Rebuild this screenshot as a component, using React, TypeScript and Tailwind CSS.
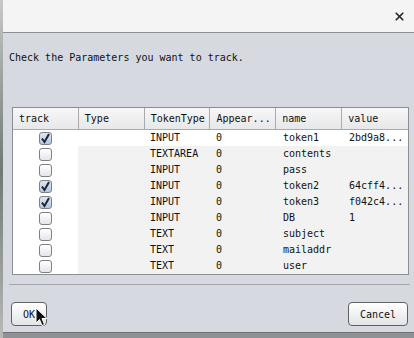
import { X } from 'lucide-react'

const COLS = ['track', 'Type', 'TokenType', 'Appear...', 'name', 'value']

const ROWS = [
  { on: true, tokenType: 'INPUT', appear: '0', name: 'token1', value: '2bd9a8...' },
  { on: false, tokenType: 'TEXTAREA', appear: '0', name: 'contents', value: '' },
  { on: false, tokenType: 'INPUT', appear: '0', name: 'pass', value: '' },
  { on: true, tokenType: 'INPUT', appear: '0', name: 'token2', value: '64cff4...' },
  { on: true, tokenType: 'INPUT', appear: '0', name: 'token3', value: 'f042c4...' },
  { on: false, tokenType: 'INPUT', appear: '0', name: 'DB', value: '1' },
  { on: false, tokenType: 'TEXT', appear: '0', name: 'subject', value: '' },
  { on: false, tokenType: 'TEXT', appear: '0', name: 'mailaddr', value: '' },
  { on: false, tokenType: 'TEXT', appear: '0', name: 'user', value: '' },
]

function Check({ on }: { on: boolean }) {
  return (
    <div
      className={`w-[13px] h-[13px] rounded-[3px] border border-[#7d8085] flex items-center justify-center ${
        on ? 'bg-gradient-to-b from-[#dfe8f2] to-[#b4c7db]' : 'bg-gradient-to-b from-[#ffffff] to-[#e4e6ea]'
      }`}
    >
      {on && (
        <svg width="11" height="11" viewBox="0 0 11 11">
          <path d="M2 5.5 L4.5 9 L9 1" fill="none" stroke="#1a2538" strokeWidth="2" />
        </svg>
      )}
    </div>
  )
}

function Cursor() {
  return (
    <svg className="absolute left-[35px] top-[307px]" width="13" height="20" viewBox="0 0 13 20">
      <path d="M1 1 L1 16 L4.5 12.5 L7 18.5 L9.5 17.5 L7 11.5 L12 11.5 Z" fill="#111" stroke="#fff" strokeWidth="1" strokeLinejoin="round" />
    </svg>
  )
}

export default function App() {
  return (
    <div
      className="relative w-[414px] h-[338px] overflow-hidden flex bg-[#8f9294]"
      style={{ fontFamily: '"DejaVu Sans Mono", monospace' }}
    >
      {/* 뒤쪽 바탕 */}
      <div className="w-[3px] h-full bg-gradient-to-b from-[#c8c8c8] via-[#6f7a72] to-[#b8b8b8]" />

      <div className="w-[411px] h-[333px] flex flex-col border-b border-[#6e7073]">
        <div className="h-[33px] bg-[#f4f4f4] border-b border-[#8d8f92] flex items-center justify-end pr-[8px]">
          <X size={13} strokeWidth={3.2} color="#2a2a2a" />
        </div>

        <div className="flex-1 bg-[#d6d9df] flex flex-col">
          <div className="pl-[6px] pt-[18px] h-[74px] text-[10px] leading-[14px] text-[#111]">
            Check the Parameters you want to track.
          </div>

          <div className="ml-[9px] w-[397px] h-[168px] border border-[#8c8e91] bg-[#f2f2f2] flex flex-col">
            <div className="h-[22px] flex border-b border-[#a8aaad] bg-gradient-to-b from-[#f7f7f7] to-[#e7e8ea]">
              {COLS.map((c, i) => (
                <div
                  key={c}
                  className={`w-[66px] h-full flex items-center pl-[6px] text-[10px] text-[#111] ${i < 5 ? 'border-r border-[#a8aaad]' : ''}`}
                >
                  {c}
                </div>
              ))}
            </div>
            <div className="flex-1 flex">
              <div className="w-[66px] bg-white flex flex-col">
                {ROWS.map((r, i) => (
                  <div key={i} className="h-[16px] flex items-center justify-center">
                    <Check on={r.on} />
                  </div>
                ))}
              </div>
              <div className="flex-1 flex flex-col">
                {ROWS.map((r, i) => (
                  <div key={i} className={`h-[16px] flex text-[10px] text-[#111] leading-[16px] ${i === 0 ? 'bg-white' : ''}`}>
                    <div className="w-[66px]" />
                    <div className="w-[66px] pl-[6px]">{r.tokenType}</div>
                    <div className="w-[66px] pl-[6px]">{r.appear}</div>
                    <div className="w-[66px] pl-[7px]">{r.name}</div>
                    <div className="w-[66px] pl-[7px]">{r.value}</div>
                  </div>
                ))}
              </div>
            </div>
          </div>

          <div className="mt-[9px] ml-[6px] w-[401px] h-[1px] bg-[#a3a6ab]" />

          <div className="mt-[17px] pl-[8px] pr-[6px] flex justify-between">
            <button className="w-[36px] h-[24px] rounded-[4px] border border-[#5f6164] bg-gradient-to-b from-[#ffffff] to-[#e3e4e7] text-[10px] text-[#111]">
              OK
            </button>
            <button className="w-[60px] h-[24px] rounded-[4px] border border-[#5f6164] bg-gradient-to-b from-[#ffffff] to-[#e3e4e7] text-[10px] text-[#111]">
              Cancel
            </button>
          </div>
        </div>
      </div>

      <Cursor />
    </div>
  )
}
